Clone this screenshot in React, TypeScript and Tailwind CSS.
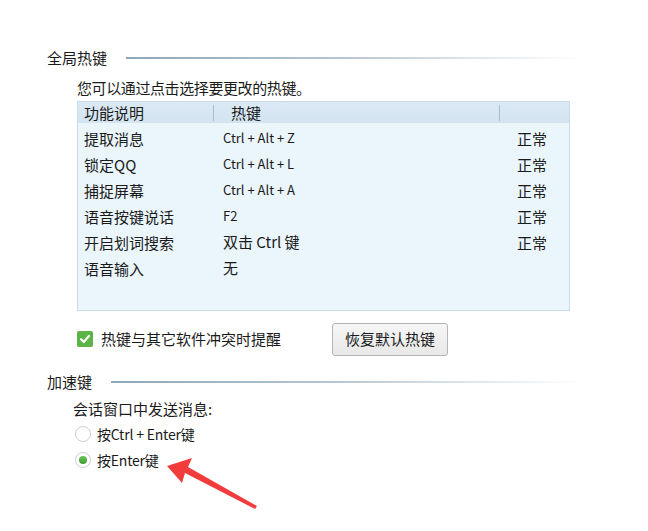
import React from "react";

const rows = [
  ["提取消息", "Ctrl + Alt + Z", "正常"],
  ["锁定QQ", "Ctrl + Alt + L", "正常"],
  ["捕捉屏幕", "Ctrl + Alt + A", "正常"],
  ["语音按键说话", "F2", "正常"],
  ["开启划词搜索", "双击 Ctrl 键", "正常"],
  ["语音输入", "无", ""],
];

function SectionTitle({ title, lineClass }: { title: string; lineClass: string }) {
  return (
    <div className="flex items-center h-[20px]">
      <span className="text-[15px] text-[#1a1a1a] leading-[20px]">{title}</span>
      <div className={`h-[2px] bg-gradient-to-r from-[#8fa6b8] via-[#b8c8d4] to-transparent ${lineClass}`} />
    </div>
  );
}

export default function App() {
  return (
    <div
      className="relative w-[648px] h-[531px] bg-white overflow-hidden"
      style={{ fontFamily: '"Noto Sans CJK SC", "Noto Sans", sans-serif' }}
    >
      <div className="pl-[47px] pt-[48px]">
        <SectionTitle title="全局热键" lineClass="ml-[19px] w-[454px]" />
        <div className="pl-[30px]">
          <div className="mt-[10px] text-[15px] leading-[20px] text-[#1a1a1a] tracking-[-0.4px]">您可以通过点击选择要更改的热键。</div>
          <div className="mt-[3px] w-[493px] h-[210px] border border-[#c7dbe8] bg-[#eaf5fc]">
            <div className="flex h-[21px] items-center bg-gradient-to-b from-[#dbe9f4] to-[#d3e4f1] text-[15px] text-[#1a1a1a]">
              <div className="w-[135px] pl-[6px] leading-[20px]">功能说明</div>
              <div className="w-px h-[16px] bg-[#a9bccb]" />
              <div className="w-[285px] pl-[17px] leading-[20px]">热键</div>
              <div className="w-px h-[16px] bg-[#a9bccb]" />
            </div>
            <div className="pt-[3px]">
              {rows.map((r, i) => (
                <div key={i} className="flex h-[26px] items-center text-[#1a1a1a]">
                  <div className="w-[145px] pl-[6px] text-[15px] leading-[20px]">{r[0]}</div>
                  {i < 4 ? (
                    <div className="w-[294px] text-[13px] leading-[20px] -mt-[3px]">{r[1]}</div>
                  ) : (
                    <div className="w-[294px] text-[15px] leading-[20px] -mt-[2px]">{r[1]}</div>
                  )}
                  <div className="text-[15px] leading-[20px]">{r[2]}</div>
                </div>
              ))}
            </div>
          </div>
          <div className="flex items-center mt-[11px] h-[34px]">
            <div className="w-[16px] h-[16px] rounded-[2px] bg-[#5db446] flex items-center justify-center">
              <svg width="12" height="12" viewBox="0 0 12 12">
                <path d="M2 6.2 L4.8 9 L10 3" stroke="white" strokeWidth="2.2" fill="none" strokeLinecap="round" strokeLinejoin="round" />
              </svg>
            </div>
            <span className="ml-[8px] text-[15px] leading-[20px] text-[#1a1a1a]">热键与其它软件冲突时提醒</span>
            <button className="ml-[51px] w-[116px] h-[33px] border border-[#b5b5b5] rounded-[3px] bg-gradient-to-b from-[#f6f6f6] to-[#e8e8e8] text-[15px] text-[#1a1a1a]">
              恢复默认热键
            </button>
          </div>
        </div>
        <div className="mt-[16px]">
          <SectionTitle title="加速键" lineClass="ml-[19px] w-[470px]" />
        </div>
        <div className="pl-[26px]">
          <div className="mt-[7px] text-[15px] leading-[20px] text-[#1a1a1a]">会话窗口中发送消息:</div>
          <div className="flex items-center mt-[5px] h-[20px]">
            <div className="ml-[2px] w-[16px] h-[16px] rounded-full border border-[#cfcfcf] bg-white" />
            <span className="ml-[6px] text-[14px] leading-[20px] text-[#1a1a1a] tracking-[-0.2px]">按Ctrl + Enter键</span>
          </div>
          <div className="flex items-center mt-[6px] h-[20px]">
            <div className="ml-[2px] w-[16px] h-[16px] rounded-full border border-[#cfcfcf] bg-white flex items-center justify-center">
              <div className="w-[8px] h-[8px] rounded-full bg-gradient-to-b from-[#6cc25a] to-[#3f9d30]" />
            </div>
            <span className="ml-[6px] text-[14px] leading-[20px] text-[#1a1a1a] tracking-[-0.2px]">按Enter键</span>
          </div>
        </div>
      </div>
      <svg className="absolute left-[160px] top-[455px]" width="110" height="60" viewBox="0 0 110 60">
        <polygon points="7,11 32,3 28,12 97,51 95,54 25,18 22,28" fill="#f23b3b" />
      </svg>
    </div>
  );
}
